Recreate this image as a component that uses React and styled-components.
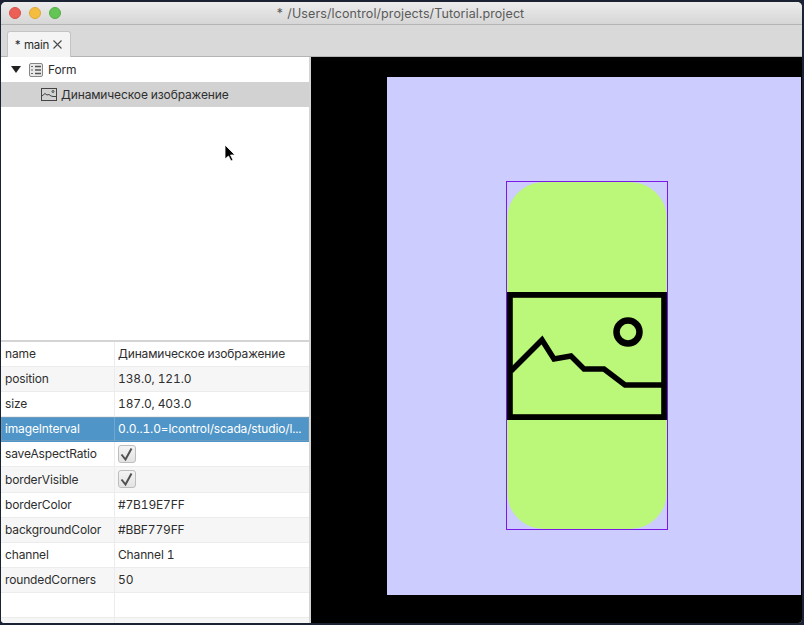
import React from 'react';
import styled, { createGlobalStyle } from 'styled-components';

const GlobalStyle = createGlobalStyle`
  html, body {
    margin: 0;
    padding: 0;
    background: #1a2233;
  }
  body {
    font-family: Inter, "Noto Sans", sans-serif;
    font-variant-numeric: tabular-nums;
    overflow: hidden;
  }
`;

const Desktop = styled.div`
  width: 804px;
  height: 625px;
  padding: 2px 2px 2px 1px;
  box-sizing: border-box;
  background: #1a2233;
`;

const Window = styled.div`
  position: relative;
  height: 100%;
  display: flex;
  flex-direction: column;
  overflow: hidden;
  border-radius: 5px 5px 4px 4px;
  background: #d9d9d9;
`;

const TitleBar = styled.div`
  position: relative;
  flex: 0 0 22px;
  height: 22px;
  padding-right: 3px;
  display: flex;
  align-items: center;
  justify-content: center;
  background: linear-gradient(#ececec, #d6d6d6);
  border-bottom: 1px solid #b4b4b4;
`;

const Lights = styled.div`
  position: absolute;
  left: 8px;
  top: 5px;
  display: flex;
  gap: 8px;
`;

const Light = styled.span`
  width: 12px;
  height: 12px;
  box-sizing: border-box;
  border-radius: 50%;
  background: ${(p) => p.$color};
  border: 1px solid ${(p) => p.$edge};
`;

const Title = styled.span`
  font-size: 12.5px;
  color: #5a5a5a;
  letter-spacing: 0.1px;
`;

const TabBar = styled.div`
  flex: 0 0 32px;
  height: 32px;
  box-sizing: border-box;
  padding: 6px 0 0 6px;
  display: flex;
  background: #d9d9d9;
  border-bottom: 1px solid #b4b4b4;
`;

const Tab = styled.div`
  width: 64px;
  height: 26px;
  box-sizing: border-box;
  display: flex;
  align-items: center;
  gap: 4px;
  padding-left: 6px;
  font-size: 11.5px;
  letter-spacing: -0.25px;
  color: #2a2a2a;
  background: #f4f4f4;
  border: 1px solid #c4c4c4;
  border-bottom: 0;
  border-radius: 3px 3px 0 0;
`;

const Content = styled.div`
  flex: 1;
  min-height: 0;
  display: flex;
`;

const LeftPane = styled.div`
  flex: 0 0 308px;
  display: flex;
  flex-direction: column;
  background: #fff;
`;

const Sash = styled.div`
  flex: 0 0 2px;
  background: #d4d4d4;
`;

const Tree = styled.div`
  flex: 0 0 283px;
  background: #fff;
`;

const TreeRow = styled.div`
  height: 25px;
  display: flex;
  align-items: center;
  gap: 4px;
  padding-left: ${(p) => p.$indent}px;
  font-size: 12px;
  letter-spacing: -0.13px;
  color: #2e2e2e;
  background: ${(p) => (p.$selected ? '#d2d2d2' : '#fff')};
`;

const Arrow = styled.svg`
  margin-right: 4px;
`;

const FormGlyph = styled.svg`
  margin-right: 1px;
`;

const HSash = styled.div`
  flex: 0 0 2px;
  background: #d4d4d4;
`;

const Table = styled.div`
  flex: 1;
  display: flex;
  flex-direction: column;
  overflow: hidden;
`;

const Row = styled.div`
  flex: 0 0 25.1px;
  box-sizing: border-box;
  display: grid;
  grid-template-columns: 113px 1fr;
  font-size: 12px;
  letter-spacing: -0.15px;
  color: ${(p) => (p.$active ? '#fff' : '#2e2e2e')};
  background: ${(p) => (p.$active ? '#4f95c7' : p.$odd ? '#f6f6f6' : '#fff')};
  border-bottom: 1px solid ${(p) => (p.$active ? '#4f95c7' : '#ececec')};
  box-shadow: ${(p) => (p.$active ? 'inset 0 0 0 1px #6a9cc0' : 'none')};
`;

const LabelCell = styled.div`
  display: flex;
  align-items: center;
  min-width: 0;
  padding: 0 0 1px 4px;
  white-space: nowrap;
  overflow: hidden;
`;

const ValueCell = styled.div`
  display: flex;
  align-items: center;
  min-width: 0;
  padding: 0 0 1px 3px;
  white-space: nowrap;
  overflow: hidden;
  border-left: 1px solid ${(p) => (p.$active ? '#6fa9d2' : '#ececec')};
`;

const Check = styled.span`
  width: 18px;
  height: 18px;
  box-sizing: border-box;
  display: flex;
  align-items: center;
  justify-content: center;
  border: 1px solid #bdbdbd;
  border-radius: 3px;
  background: linear-gradient(#f4f4f4, #e3e3e3);
`;

const Canvas = styled.div`
  flex: 1;
  min-width: 0;
  background: #000;
  padding: 20px 1px 28px 76px;
  display: flex;
`;

const Page = styled.div`
  position: relative;
  flex: 1;
  background: #ccccff;
`;

const Widget = styled.div`
  position: absolute;
  left: 119px;
  top: 104px;
  width: 162px;
  height: 349px;
  box-sizing: border-box;
  border: 1px solid #7b19e7;
  display: flex;
`;

const WidgetFill = styled.div`
  flex: 1;
  display: flex;
  align-items: center;
  background: #bbf779;
  border-radius: 37px;
`;

const Cursor = styled.svg`
  position: absolute;
  left: 223px;
  top: 142px;
`;

const rows = [
  ['name', 'Динамическое изображение'],
  ['position', '138.0, 121.0'],
  ['size', '187.0, 403.0'],
  ['imageInterval', '0.0..1.0=lcontrol/scada/studio/l...'],
  ['saveAspectRatio', null],
  ['borderVisible', null],
  ['borderColor', '#7B19E7FF'],
  ['backgroundColor', '#BBF779FF'],
  ['channel', 'Channel 1'],
  ['roundedCorners', '50'],
  ['', ''],
  ['', ''],
];

const FormIcon = () => (
  <FormGlyph width="14" height="14" viewBox="0 0 14 14" fill="none" stroke="#666">
    <rect x="0.5" y="0.5" width="13" height="13" rx="1.5" fill="#e9e9e9" stroke="#858585" />
    <path d="M2 3.500h2M2 7h2M2 10.500h2" strokeWidth="1" />
    <path d="M6 3.500h6M6 7h6M6 10.500h6" strokeWidth="1.600" stroke="#555" />
  </FormGlyph>
);

const ImageIcon = () => (
  <svg width="16" height="13" viewBox="0 0 16 13" fill="none" stroke="#444">
    <rect x="0.5" y="0.5" width="15" height="12" />
    <path d="M1 8l3-2.500 2 1.500 2-.5 2 1.500 2 .5h3" />
    <circle cx="12" cy="3.500" r="1" />
  </svg>
);

const CheckMark = () => (
  <svg width="16" height="16" viewBox="0 0 16 16" fill="none" stroke="#505050" strokeWidth="2">
    <path d="M2.500 8.500L6.500 13.500L12.500 2.500" />
  </svg>
);

const BigImage = () => (
  <svg width="160" height="128" viewBox="0 0 160 128" fill="none" stroke="#000" strokeWidth="5.800">
    <rect x="2.900" y="2.900" width="154.200" height="122.200" />
    <path d="M4 79L35 48L47 67L64 64L77 77L97 77L118 93L157 93" strokeWidth="5.500" />
    <circle cx="121" cy="40" r="11.500" strokeWidth="6.500" />
  </svg>
);

export default function App() {
  return (
    <>
      <GlobalStyle />
      <Desktop>
        <Window>
          <TitleBar>
            <Lights>
              <Light $color="#ec5f57" $edge="#d5504a" />
              <Light $color="#f5bd3f" $edge="#dfa833" />
              <Light $color="#62c554" $edge="#54ad47" />
            </Lights>
            <Title>* /Users/lcontrol/projects/Tutorial.project</Title>
          </TitleBar>
          <TabBar>
            <Tab>
              <span>* main</span>
              <svg width="9" height="9" viewBox="0 0 9 9" stroke="#4a4a4a" strokeWidth="1.100">
                <path d="M0.500 0.500l8 8M8.500 0.500l-8 8" />
              </svg>
            </Tab>
          </TabBar>
          <Content>
            <LeftPane>
              <Tree>
                <TreeRow $indent={10}>
                  <Arrow width="10" height="7" viewBox="0 0 10 7" fill="#222">
                    <path d="M0 0h10L5 7z" />
                  </Arrow>
                  <FormIcon />
                  <span>Form</span>
                </TreeRow>
                <TreeRow $indent={40} $selected>
                  <ImageIcon />
                  <span>Динамическое изображение</span>
                </TreeRow>
              </Tree>
              <HSash />
              <Table>
                {rows.map(([label, value], i) => {
                  const active = label === 'imageInterval';
                  return (
                    <Row key={i} $odd={i % 2 === 1} $active={active}>
                      <LabelCell>{label}</LabelCell>
                      <ValueCell $active={active}>
                        {value === null ? (
                          <Check>
                            <CheckMark />
                          </Check>
                        ) : (
                          value
                        )}
                      </ValueCell>
                    </Row>
                  );
                })}
              </Table>
            </LeftPane>
            <Sash />
            <Canvas>
              <Page>
                <Widget>
                  <WidgetFill>
                    <BigImage />
                  </WidgetFill>
                </Widget>
              </Page>
            </Canvas>
          </Content>
          <Cursor width="12" height="18" viewBox="0 0 12 18">
            <path d="M1 1v14l3.500-3 2.500 5 2-1-2.500-5H11z" fill="#000" stroke="#fff" strokeWidth="0.800" />
          </Cursor>
        </Window>
      </Desktop>
    </>
  );
}
